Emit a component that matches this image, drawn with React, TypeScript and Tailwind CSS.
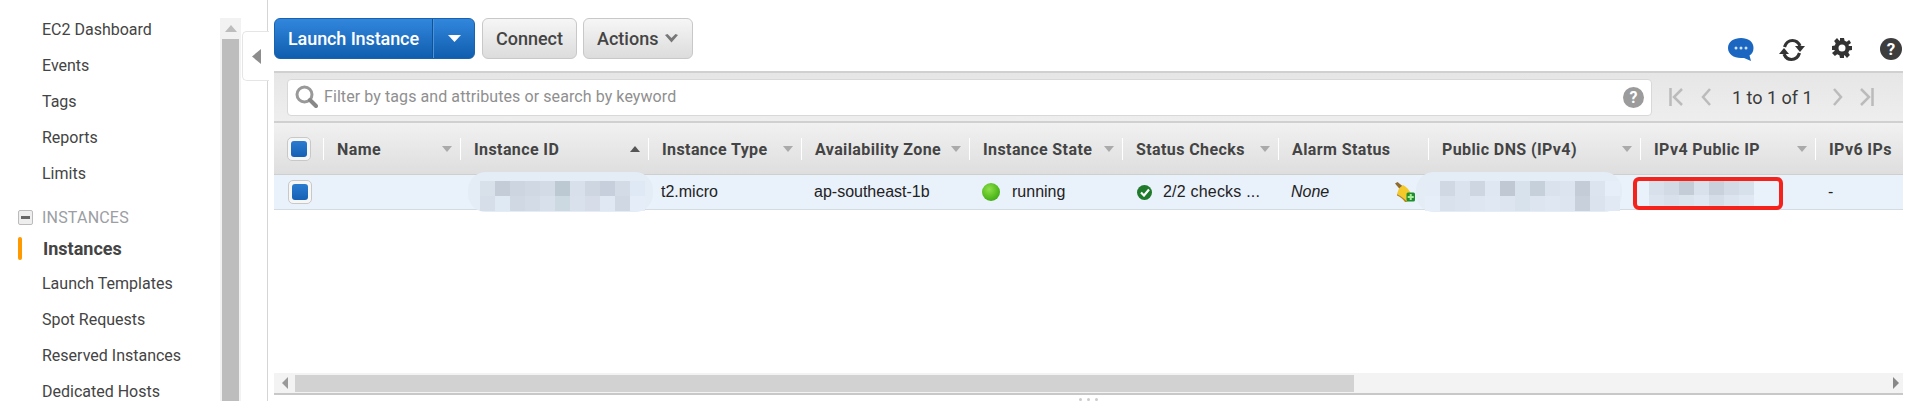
const navTop = ['EC2 Dashboard', 'Events', 'Tags', 'Reports', 'Limits']
const navInstances = ['Launch Templates', 'Spot Requests', 'Reserved Instances', 'Dedicated Hosts']

const columns = [
  { label: 'Name', width: 'w-[137px]', caret: 'down' },
  { label: 'Instance ID', width: 'w-[188px]', caret: 'up' },
  { label: 'Instance Type', width: 'w-[153px]', caret: 'down' },
  { label: 'Availability Zone', width: 'w-[168px]', caret: 'down' },
  { label: 'Instance State', width: 'w-[153px]', caret: 'down' },
  { label: 'Status Checks', width: 'w-[156px]', caret: 'down' },
  { label: 'Alarm Status', width: 'w-[150px]', caret: '' },
  { label: 'Public DNS (IPv4)', width: 'w-[212px]', caret: 'down' },
  { label: 'IPv4 Public IP', width: 'w-[175px]', caret: 'down' },
  { label: 'IPv6 IPs', width: 'w-[88px]', caret: '' },
]

const idTop = ['bg-[#d8e0ea]', 'bg-[#c4ccd8]', 'bg-[#cdd5e0]', 'bg-[#cfd8e3]', 'bg-[#d2dbe6]', 'bg-[#bcc9d2]', 'bg-[#d8e1eb]', 'bg-[#cdd6e1]', 'bg-[#c8cfdc]', 'bg-[#d2dbe6]', 'bg-[#dfe9f5]']
const idBottom = ['bg-[#d6dfe9]', 'bg-[#dfe9f3]', 'bg-[#d0d9e3]', 'bg-[#d2dbe6]', 'bg-[#d8e1eb]', 'bg-[#cdd9e0]', 'bg-[#d8e1ec]', 'bg-[#d6dde8]', 'bg-[#e0e8f3]', 'bg-[#d0d8e3]', 'bg-[#e5eef8]']
const dnsTop = ['bg-[#e4edf7]', 'bg-[#cfd8e3]', 'bg-[#dbe3ee]', 'bg-[#ced6e1]', 'bg-[#dfe8f2]', 'bg-[#c0c8d4]', 'bg-[#d8e2ec]', 'bg-[#c6d0da]', 'bg-[#dae3ed]', 'bg-[#dce5ef]', 'bg-[#c4ccd7]', 'bg-[#dbe4ef]', 'bg-[#e6eff9]']
const dnsBottom = ['bg-[#e6eff9]', 'bg-[#d9e2ec]', 'bg-[#dbe4ee]', 'bg-[#dee7f1]', 'bg-[#e0e9f3]', 'bg-[#dde6f0]', 'bg-[#d8e2ec]', 'bg-[#dde6f0]', 'bg-[#dfe8f2]', 'bg-[#dde6f0]', 'bg-[#c8d0db]', 'bg-[#dae3ee]', 'bg-[#e0e9f4]']
const ipTop = ['bg-[#d8e1eb]', 'bg-[#d2dae5]', 'bg-[#c4ccd8]', 'bg-[#d9e2ec]', 'bg-[#c9d1dc]', 'bg-[#d2dbe6]', 'bg-[#d6e1eb]']
const ipBottom = ['bg-[#dce5ef]', 'bg-[#d8e1eb]', 'bg-[#dbe3ed]', 'bg-[#dfe8f2]', 'bg-[#d5dde8]', 'bg-[#dce5ef]', 'bg-[#dfe8f3]']

function Mosaic({ top, bottom }: { top: string[]; bottom: string[] }) {
  return (
    <div className="flex flex-col">
      <div className="flex">{top.map((c, i) => <div key={i} className={`w-[15px] h-[15px] ${c}`} />)}</div>
      <div className="flex">{bottom.map((c, i) => <div key={i} className={`w-[15px] h-[15px] ${c}`} />)}</div>
    </div>
  )
}

function Caret({ up, className, w = 10, h = 6 }: { up?: boolean; className: string; w?: number; h?: number }) {
  return (
    <svg width={w} height={h} viewBox="0 0 12 7" preserveAspectRatio="none" className={className}>
      <path d={up ? 'M6 0 L12 7 L0 7 Z' : 'M0 0 L12 0 L6 7 Z'} fill="currentColor" />
    </svg>
  )
}

function Check() {
  return (
    <div className="w-[24px] h-[24px] shrink-0 rounded-[5px] border border-[#c8c8c8] bg-[#f6f6f6] flex items-center justify-center">
      <div className="w-[16px] h-[16px] rounded-[3px] bg-gradient-to-b from-[#2a7bd0] to-[#1560b4]" />
    </div>
  )
}

function Bell() {
  return (
    <svg width="20" height="20" viewBox="0 0 20 20" className="shrink-0">
      <path d="M0 1.500 L2.500 0 L8 4.500 L5.500 8 Z" fill="#8f6b2c" />
      <path d="M4 6.500 L8 3 C11 4.500 14.500 8 16 12 L12.500 20 C10 17 6.500 14 2 12 Z" fill="#f4c92a" />
      <path d="M2 12 C6.500 14 10 17 12.500 20 L10 20 C8 17 5.500 15 2 13.500 Z" fill="#b58a1c" />
      <rect x="11.500" y="10.500" width="8.500" height="9" rx="1.500" fill="#1d8f2f" />
      <path d="M15.700 12 V18 M12.700 15 H18.700" stroke="#a8ee9a" strokeWidth="2" />
    </svg>
  )
}

function Pager({ d, w }: { d: string; w: number }) {
  return (
    <svg width={w} height="18" viewBox={`0 0 ${w} 18`} className="shrink-0">
      <path d={d} fill="none" stroke="#bbbbbb" strokeWidth="2.500" />
    </svg>
  )
}

export default function App() {
  return (
    <div className="flex w-[1920px] h-[401px] overflow-hidden bg-white font-['Roboto',sans-serif] text-[16px] text-[#444]">
      <nav className="w-[220px] shrink-0 pt-[12px] overflow-hidden">
        {navTop.map((n) => (
          <div key={n} className="h-[36px] pl-[42px] flex items-center">{n}</div>
        ))}
        <div className="h-[25px] mt-[13px] pl-[18px] flex items-center text-[#9b9ea3] tracking-[0.2px]">
          <div className="w-[15px] h-[15px] rounded-[2px] border border-[#bbb] bg-[#eee] flex items-center justify-center mr-[9px]">
            <div className="w-[9px] h-[3px] bg-[#666]" />
          </div>
          INSTANCES
        </div>
        <div className="h-[36px] pl-[18px] flex items-center font-bold text-[18px]">
          <div className="w-[4px] h-[23px] rounded-[2px] bg-[#f90] mr-[21px]" />
          Instances
        </div>
        {navInstances.map((n) => (
          <div key={n} className="h-[36px] pl-[42px] flex items-center">{n}</div>
        ))}
      </nav>

      <div className="w-[21px] shrink-0 mt-[18px] flex flex-col bg-[#f2f2f2]">
        <div className="h-[21px] flex items-center justify-center">
          <Caret up w={12} h={7} className="text-[#bdbdbd]" />
        </div>
        <div className="flex-1 mx-[2px] bg-[#bdbdbd]" />
      </div>

      <div className="relative w-[33px] shrink-0">
        <div className="ml-[26px] w-px h-full bg-[#d5d5d5]" />
        <div className="absolute left-[1px] top-[31px] w-[27px] h-[50px] bg-white border border-r-0 border-[#e5e5e5] rounded-l-[5px] flex items-center pl-[9px]">
          <svg width="9" height="15" viewBox="0 0 9 15"><path d="M9 0 V15 L0 7.5 Z" fill="#8d8d8d" /></svg>
        </div>
      </div>

      <main className="relative flex-1 min-w-0 pr-[17px] pt-[18px] flex flex-col">
        <div className="flex h-[41px] shrink-0 text-[18px] font-medium">
          <button className="w-[201px] h-[41px] flex rounded-[6px] border border-[#1a62ad] bg-gradient-to-b from-[#3187dd] to-[#0f5dae] text-white">
            <span className="w-[158px] h-full pl-[13px] flex items-center border-r border-[#0f5397] tracking-[-0.1px]">Launch Instance</span>
            <span className="flex-1 h-full flex items-center justify-center border-l border-[#4b93dc]">
              <Caret w={13} h={7} className="text-white" />
            </span>
          </button>
          <button className="ml-[7px] w-[95px] h-[41px] rounded-[6px] border border-[#c8c8c8] bg-gradient-to-b from-[#f6f6f6] to-[#dcdcdc]">Connect</button>
          <button className="ml-[6px] w-[110px] h-[41px] rounded-[6px] border border-[#c8c8c8] bg-gradient-to-b from-[#f6f6f6] to-[#dcdcdc] flex items-center pl-[13px]">
            Actions
            <svg width="13" height="9" viewBox="0 0 13 9" className="ml-[7px]"><path d="M0 1 L2.5 0 L6.5 4 L10.5 0 L13 1 L6.5 8.500 Z" fill="#777" /></svg>
          </button>
          <div className="ml-auto flex items-start pt-[20px] pr-[1px]">
            <svg width="26" height="24" viewBox="0 0 26 24" className="mr-[25px]">
              <path d="M13 0 C20 0 25.500 3.500 25.500 10 C25.500 13.500 24 16 21.500 17.500 L23 23 L16 20 L13 20 C5.500 20 0 16 0 10 C0 3.500 6 0 13 0 Z" fill="#1a66c0" />
              <circle cx="8" cy="10" r="1.500" fill="#cfe2f7" />
              <circle cx="13" cy="10" r="1.500" fill="#cfe2f7" />
              <circle cx="18" cy="10" r="1.500" fill="#cfe2f7" />
            </svg>
            <svg width="26" height="24" viewBox="0 0 26 24" className="mr-[27px]">
              <path d="M5.500 9 C7 4.500 10 2.500 13.500 2.500 C17 2.500 19.500 4.500 21 8" fill="none" stroke="#333" strokeWidth="3.200" />
              <path d="M16 8 H26 L21 14 Z" fill="#333" />
              <path d="M20.500 15 C19 19.500 16 21.500 12.500 21.500 C9 21.500 6.500 19.500 5 16" fill="none" stroke="#333" strokeWidth="3.200" />
              <path d="M0 16 H10 L5 10 Z" fill="#333" />
            </svg>
            {/* gear */}
            <svg width="20" height="20" viewBox="0 0 20 20" className="mr-[28px]">
              <path fillRule="evenodd" d="M8 0 H12 L12.600 2.800 L14.800 3.700 L17.100 2.100 L17.900 2.900 L19 5 L16.300 6.900 L17.200 8 L20 8 V12 L17.200 12.600 L16.300 14.800 L17.900 17.100 L15 20 L12.900 17.600 L12 17.300 L12 20 H8 L7.400 17.200 L5.200 16.300 L2.900 17.900 L0 15 L2.400 12.900 L2.800 12 L0 12 V8 L2.800 7.400 L3.700 5.200 L2.100 2.900 L5 0 L7.100 2.400 L8 2.800 Z M10 6.500 A3.500 3.500 0 1 0 10 13.500 A3.500 3.500 0 1 0 10 6.500 Z" fill="#333" />
            </svg>
            <div className="w-[22px] h-[22px] rounded-full bg-[#3d3d3d] text-white text-[17px] font-bold leading-[22px] text-center">?</div>
          </div>
        </div>

        <div className="mt-[12px] h-[52px] shrink-0 border-t-2 border-b-2 border-[#d0d0d0] bg-gradient-to-b from-[#e6e6e6] to-[#eeeeee] flex items-center pl-[13px]">
          <div className="w-[1365px] h-[37px] rounded-[4px] border border-[#d8d8d8] bg-white flex items-center pl-[7px] pr-[7px]">
            <svg width="23" height="24" viewBox="0 0 23 24" className="shrink-0">
              <circle cx="9.500" cy="9.500" r="7.500" fill="none" stroke="#999" strokeWidth="3" />
              <path d="M15 15 L21 21" stroke="#888" strokeWidth="4" strokeLinecap="round" />
            </svg>
            <span className="ml-[6px] flex-1 text-[#8f8f8f] tracking-[0.08px]">Filter by tags and attributes or search by keyword</span>
            <div className="w-[21px] h-[21px] rounded-full bg-[#9b9b9b] text-white text-[16px] font-bold leading-[21px] text-center">?</div>
          </div>
          <div className="ml-[17px]"><Pager w={14} d="M1.500 0 V18 M13 1 L5 9 L13 17" /></div>
          <div className="ml-[18px]"><Pager w={10} d="M9 1 L2 9 L9 17" /></div>
          <span className="ml-[21px] w-[79px] shrink-0 text-[18px] text-[#3a3a3a] whitespace-nowrap">1 to 1 of 1</span>
          <div className="ml-[22px]"><Pager w={10} d="M1 1 L8 9 L1 17" /></div>
          <div className="ml-[17px]"><Pager w={14} d="M1 1 L9 9 L1 17 M12.500 0 V18" /></div>
        </div>

        <div className="h-[52px] shrink-0 flex items-center bg-gradient-to-b from-[#f1f1f1] to-[#dedede] border-b border-[#cfcfcf] font-bold tracking-[0.4px] text-[#444]">
          <div className="w-[49px] shrink-0 pl-[13px]"><Check /></div>
          {columns.map((c) => (
            <div key={c.label} className={`${c.width} shrink-0 h-[22px] flex items-center justify-between pl-[13px] pr-[8px] border-l border-[#fff] whitespace-nowrap`}>
              <span className="mt-[2px]">{c.label}</span>
              {c.caret === 'down' && <Caret className="text-[#aaa] shrink-0" />}
              {c.caret === 'up' && <Caret up className="text-[#555] shrink-0" />}
            </div>
          ))}
        </div>

        <div className="h-[35px] shrink-0 flex items-center bg-[#e9f1fb] border-b border-[#d5dbe3] font-['Liberation_Sans',sans-serif] text-[#222]">
          <div className="w-[49px] shrink-0 pl-[14px]"><Check /></div>
          <div className="w-[137px] shrink-0" />
          <div className="w-[188px] shrink-0" />
          <div className="w-[153px] shrink-0 pl-[13px]">t2.micro</div>
          <div className="w-[168px] shrink-0 pl-[13px]">ap-southeast-1b</div>
          <div className="w-[153px] shrink-0 pl-[13px] flex items-center">
            <div className="w-[18px] h-[18px] rounded-full bg-[radial-gradient(circle_at_40%_35%,#8fe04a,#4fb81c_60%,#37961a)]" />
            <span className="ml-[12px]">running</span>
          </div>
          <div className="w-[156px] shrink-0 pl-[15px] flex items-center">
            <div className="w-[15px] h-[15px] rounded-full bg-[#1f7a2c] flex items-center justify-center">
              <svg width="10" height="9" viewBox="0 0 10 9"><path d="M1 4.500 L4 7.500 L9 1.500" fill="none" stroke="#fff" strokeWidth="2.200" /></svg>
            </div>
            <span className="ml-[11px] tracking-[0.2px]">2/2 checks ...</span>
          </div>
          <div className="w-[150px] shrink-0 pl-[13px] flex items-center justify-between pr-[13px] italic">
            None
            <Bell />
          </div>
          <div className="w-[212px] shrink-0" />
          <div className="w-[175px] shrink-0" />
          <div className="w-[88px] shrink-0 pl-[13px]">-</div>
        </div>

        <div className="flex-1" />

        <div className="h-[22px] shrink-0 flex items-center bg-[#f3f3f3] border-b-2 border-[#c8c8c8] pl-[8px] pr-[4px]">
          <svg width="6" height="12" viewBox="0 0 6 12"><path d="M6 0 V12 L0 6 Z" fill="#999" /></svg>
          <div className="ml-[7px] w-[1059px] h-[17px] bg-[#d2d2d2]" />
          <svg width="6" height="12" viewBox="0 0 6 12" className="ml-auto"><path d="M0 0 V12 L6 6 Z" fill="#888" /></svg>
        </div>

        <div className="h-[6px] shrink-0 flex justify-center items-end gap-[5px]">
          <div className="w-[3px] h-[3px] rounded-full bg-[#ccc]" />
          <div className="w-[3px] h-[3px] rounded-full bg-[#ccc]" />
          <div className="w-[3px] h-[3px] rounded-full bg-[#ccc]" />
        </div>

        {/* redacted patches and the red highlight lie over the table row */}
        <div className="absolute left-[194px] top-[172px] w-[185px] h-[40px] rounded-[18px] bg-[#e4ecf6] flex items-center justify-end pr-[8px] pt-[7px]">
          <Mosaic top={idTop} bottom={idBottom} />
        </div>
        <div className="absolute left-[1142px] top-[172px] w-[206px] h-[40px] rounded-[18px] bg-[#e4ecf6] flex items-center pl-[9px] pt-[7px]">
          <Mosaic top={dnsTop} bottom={dnsBottom} />
        </div>
        <div className="absolute left-[1359px] top-[177px] w-[150px] h-[33px] rounded-[6px] border-[4px] border-[#f5221b] overflow-hidden flex items-start pl-[12px]">
          <div className="-mt-[1px]"><Mosaic top={ipTop} bottom={ipBottom} /></div>
        </div>
      </main>
    </div>
  )
}
